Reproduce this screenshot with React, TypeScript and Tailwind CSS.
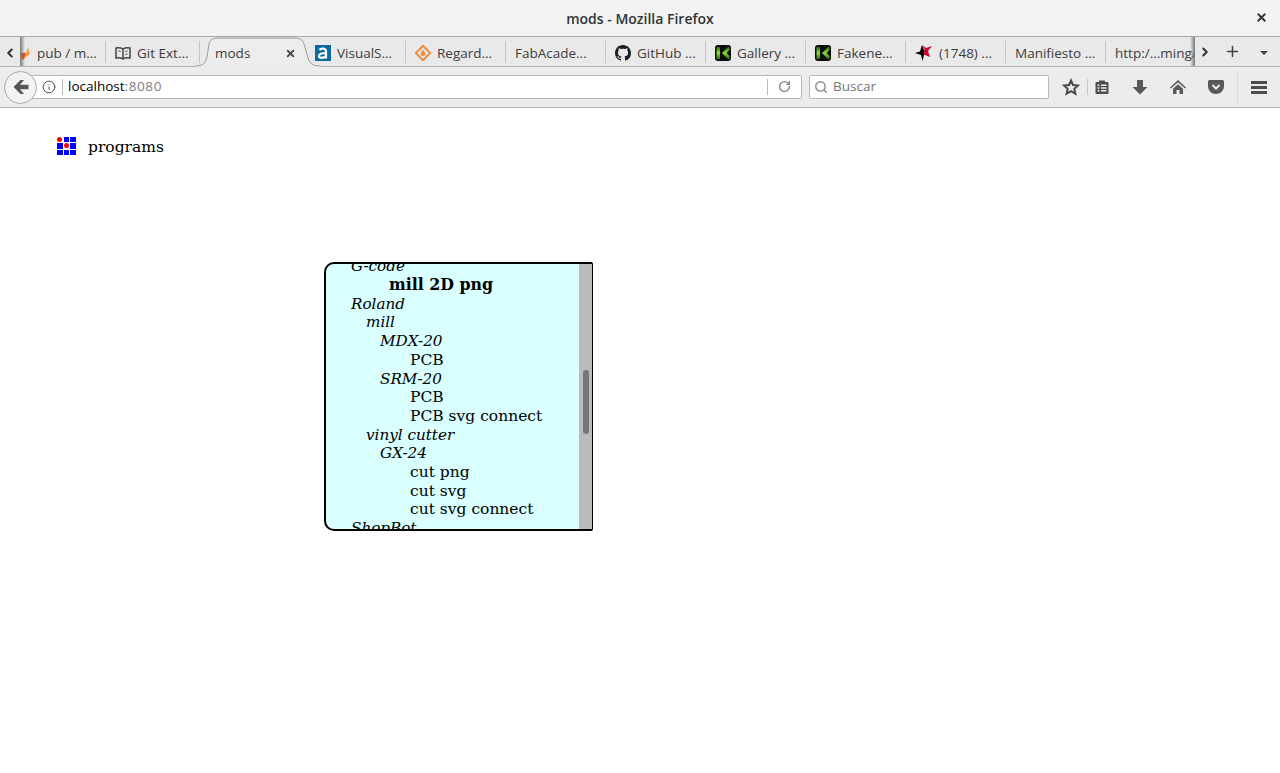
import type { ReactNode } from "react"
import { Plus, X, ChevronLeft, ChevronRight, Info, RotateCw, Search } from "lucide-react"

type Tab = { label: string; icon?: ReactNode; width: string }

const UI_FONT = "font-['Open_Sans','Noto_Sans',sans-serif]"

function GitLabIcon() {
  return (
    <svg width="16" height="16" viewBox="0 0 16 16" className="shrink-0">
      <path d="M8 15 1 9l2-7 2 6h6l2-6 2 7z" fill="#fc9d46" />
      <path d="M8 15 5 8h6z" fill="#e24329" />
    </svg>
  )
}

function BookIcon() {
  return (
    <svg width="16" height="16" viewBox="0 0 16 16" fill="none" stroke="#444" strokeWidth="1.5" className="shrink-0">
      <path d="M8 4C6.5 3 3 2.5 1 3v10c2-.5 5.500 0 7 1 1.500-1 5-1.500 7-1V3C13 2.500 9.500 3 8 4zM8 4v10" />
      <path d="M3.500 6c.8 0 1.700.2 2.300.5M10.200 6.500c.5-.3 1.400-.5 2.300-.5M10.200 9.500c.5-.3 1.400-.5 2.300-.5" strokeWidth="1" />
    </svg>
  )
}

function VisualStudioIcon() {
  return (
    <svg width="16" height="16" viewBox="0 0 16 16" className="shrink-0">
      <rect width="16" height="16" fill="#0e6a9e" />
      <path d="M4.500 5C6 3 11 3 11 6.500V13.500M11 8C6.500 7.800 4 9 4 11c0 2.500 5 2.500 7 0" fill="none" stroke="#fff" strokeWidth="2.200" />
    </svg>
  )
}

function RegardIcon() {
  return (
    <svg width="16" height="16" viewBox="0 0 16 16" className="shrink-0">
      <path d="M8 .8 15.200 8 8 15.200.8 8z" fill="none" stroke="#f08a3c" strokeWidth="2" />
      <path d="M8 4.500 10.500 8.500A2.500 2.500 0 1 1 5.500 8.500z" fill="#f08a3c" />
    </svg>
  )
}

function GitHubIcon() {
  return (
    <svg width="16" height="16" viewBox="0 0 16 16" fill="#1b1f23" className="shrink-0">
      <path d="M8 0C3.580 0 0 3.580 0 8c0 3.540 2.290 6.530 5.470 7.590.4.070.55-.17.55-.38 0-.19-.01-.82-.01-1.490-2.010.37-2.530-.49-2.690-.94-.09-.23-.48-.94-.82-1.130-.28-.15-.68-.52-.01-.53.63-.01 1.080.58 1.230.82.720 1.210 1.870.87 2.330.66.070-.52.280-.87.510-1.070-1.780-.2-3.640-.89-3.640-3.950 0-.87.310-1.590.82-2.150-.08-.2-.36-1.020.08-2.120 0 0 .67-.21 2.200.82.640-.18 1.320-.27 2-.27s1.360.09 2 .27c1.530-1.040 2.200-.82 2.200-.82.440 1.100.16 1.920.08 2.120.51.560.82 1.270.82 2.150 0 3.070-1.870 3.750-3.650 3.950.29.250.54.730.54 1.480 0 1.070-.01 1.930-.01 2.200 0 .21.150.46.550.38A8.010 8.010 0 0 0 16 8c0-4.420-3.580-8-8-8z" />
    </svg>
  )
}

function KIcon({ id }: { id: string }) {
  return (
    <svg width="16" height="16" viewBox="0 0 16 16" className="shrink-0">
      <defs>
        <linearGradient id={id} x1="0" y1="0" x2="0" y2="1">
          <stop offset="0" stopColor="#2c6a10" />
          <stop offset="0.5" stopColor="#8fe034" />
          <stop offset="1" stopColor="#2c6a10" />
        </linearGradient>
      </defs>
      <rect width="16" height="16" rx="3" fill="#0c0c0c" />
      <path d="M1.500 2h3.500v12H1.500z" fill={`url(#${id})`} />
      <path d="M13 2 7 8l6 6h1.500V11L11.500 8l3-3V2z" fill={`url(#${id})`} />
    </svg>
  )
}

function StarFaviconIcon() {
  return (
    <svg width="18" height="18" viewBox="0 0 18 18" className="shrink-0">
      <path d="M0 9 5 7.500 7 1 9 6l3 2-3 3-1.500 6L6 11z" fill="#000" />
      <path d="M7 1 11 4 17 2 13 7l2 6-5-2-2-2 2-3z" fill="#cc0033" />
    </svg>
  )
}

function StarIcon() {
  return (
    <svg width="18" height="18" viewBox="0 0 18 18" fill="none" stroke="#4a4a4a" strokeWidth="2" strokeLinejoin="miter" className="shrink-0">
      <path d="M9 2.500 11 7l5 .5-3.700 3.300 1.100 5L9 13.200l-4.400 2.600 1.100-5L2 7.500 7 7z" />
    </svg>
  )
}

function BackArrowIcon() {
  return (
    <svg width="16" height="16" viewBox="0 0 16 16" fill="#555" className="shrink-0">
      <path d="M0.500 8 7.500 1H11L7 5.800h8.500v4.400H7L11 15H7.500z" />
    </svg>
  )
}

function LibraryIcon() {
  return (
    <svg width="16" height="16" viewBox="0 0 16 16" className="shrink-0">
      <path d="M2.500 3H5V1.500h6V3h2.500A1 1 0 0 1 14.500 4v10a1 1 0 0 1-1 1h-11a1 1 0 0 1-1-1V4a1 1 0 0 1 1-1z" fill="#4d4d4d" />
      <path d="M3.500 5.500h2V7h-2zm3.500 0h5.500V7H7zM3.500 8.200h2v1.500h-2zm3.500 0h5.500v1.500H7zM3.500 11h2v1.500h-2zm3.500 0h5.500v1.500H7z" fill="#ececec" />
    </svg>
  )
}

function DownloadIcon() {
  return (
    <svg width="16" height="16" viewBox="0 0 16 16" fill="#595959" className="shrink-0">
      <path d="M5 1h6v7h4.500L8 15.500.5 8H5z" />
    </svg>
  )
}

function HomeIcon() {
  return (
    <svg width="16" height="16" viewBox="0 0 16 16" fill="#595959" className="shrink-0">
      <path d="M8 1 0 8.500l1 1L8 3.300l7 6.200 1-1z" />
      <path d="M3 9.800 8 5.300l5 4.500V15H9.500v-4h-3v4H3z" />
    </svg>
  )
}

function PocketIcon() {
  return (
    <svg width="16" height="16" viewBox="0 0 16 16" className="shrink-0">
      <path d="M1.500 1h13A1.500 1.500 0 0 1 16 2.500V7c0 4.500-3.500 8-8 8s-8-3.500-8-8V2.500A1.500 1.500 0 0 1 1.500 1z" fill="#595959" />
      <path d="m4.500 6 3.500 3.500L11.500 6" fill="none" stroke="#ececec" strokeWidth="2" />
    </svg>
  )
}

const TABS_AFTER: Tab[] = [
  { label: "VisualS...", icon: <VisualStudioIcon />, width: "w-[100px]" },
  { label: "Regard...", icon: <RegardIcon />, width: "w-[100px]" },
  { label: "FabAcade...", width: "w-[100px]" },
  { label: "GitHub ...", icon: <GitHubIcon />, width: "w-[100px]" },
  { label: "Gallery ...", icon: <KIcon id="k-gallery" />, width: "w-[100px]" },
  { label: "Fakene...", icon: <KIcon id="k-fakene" />, width: "w-[100px]" },
  { label: "(1748) ...", icon: <StarFaviconIcon />, width: "w-[100px]" },
  { label: "Manifiesto ...", width: "w-[100px]" },
]

type TreeRow = { text: string; indent: string; style?: "italic" | "bold" }

const TREE: TreeRow[] = [
  { text: "G-code", indent: "pl-[25px]", style: "italic" },
  { text: "mill 2D png", indent: "pl-[63px]", style: "bold" },
  { text: "Roland", indent: "pl-[25px]", style: "italic" },
  { text: "mill", indent: "pl-[40px]", style: "italic" },
  { text: "MDX-20", indent: "pl-[54px]", style: "italic" },
  { text: "PCB", indent: "pl-[84px]" },
  { text: "SRM-20", indent: "pl-[54px]", style: "italic" },
  { text: "PCB", indent: "pl-[84px]" },
  { text: "PCB svg connect", indent: "pl-[84px]" },
  { text: "vinyl cutter", indent: "pl-[40px]", style: "italic" },
  { text: "GX-24", indent: "pl-[54px]", style: "italic" },
  { text: "cut png", indent: "pl-[84px]" },
  { text: "cut svg", indent: "pl-[84px]" },
  { text: "cut svg connect", indent: "pl-[84px]" },
  { text: "ShopBot", indent: "pl-[25px]", style: "italic" },
]

function TabItem({ tab }: { tab: Tab }) {
  return (
    <div className={`${tab.width} h-[29px] shrink-0 flex items-center gap-[6px] pl-[9px] pr-[8px] pt-[3px] relative`}>
      {tab.icon}
      <span className="text-[13.5px] text-[#3c3c3c] whitespace-nowrap overflow-hidden">{tab.label}</span>
      <span className="absolute right-0 top-[4px] h-[22px] w-px bg-[#c4c4c4]" />
    </div>
  )
}

function ToolButton({ children, width }: { children: ReactNode; width: string }) {
  return <div className={`${width} h-[24px] flex items-center justify-center shrink-0`}>{children}</div>
}

function ModsLogo() {
  const cells = [true, false, false, false, true, false, false, false, false]
  return (
    <div className="grid grid-cols-3 grid-rows-3 gap-px w-[19px] h-[19px]">
      {cells.map((dot, i) => (
        <div key={i} className={dot ? "flex items-center justify-center bg-white" : "bg-[#0000ff]"}>
          {dot && <div className="w-[5px] h-[5px] shrink-0 rounded-full bg-[#ff0000]" />}
        </div>
      ))}
    </div>
  )
}

export default function App() {
  return (
    <div className="w-[1280px] h-[773px] bg-white overflow-hidden flex flex-col">
      <header className={`${UI_FONT} shrink-0`}>
        <div className="h-[37px] bg-[#f3f3f3] border-b border-[#a8a8a8] flex items-center relative">
          <div className="flex-1 text-center text-[14px] font-semibold text-[#2e3436]">mods - Mozilla Firefox</div>
          <X size={13} strokeWidth={3.5} className="absolute right-[12px] top-[11px] text-[#2e3436]" />
        </div>

        <div className="h-[30px] bg-[#e9e9e9] border-b border-[#b5b5b5] flex items-start">
          <div className="w-[20px] h-[29px] shrink-0 flex items-center justify-center pt-[2px]">
            <ChevronLeft size={14} strokeWidth={3.5} className="text-[#333]" />
          </div>
          <div className="w-[86px] h-[29px] shrink-0 flex items-center gap-[6px] pt-[3px] relative overflow-hidden">
            <div className="w-[11px] overflow-hidden flex justify-end shrink-0">
              <GitLabIcon />
            </div>
            <span className="text-[13.5px] text-[#3c3c3c] whitespace-nowrap">pub / m...</span>
            <span className="absolute right-0 top-[4px] h-[22px] w-px bg-[#c4c4c4]" />
            <span className="absolute left-0 top-0 h-[29px] w-[5px] bg-gradient-to-r from-[#777] to-transparent" />
          </div>
          <TabItem tab={{ label: "Git Ext...", icon: <BookIcon />, width: "w-[94px]" }} />
          <div className="w-[106px] h-[30px] shrink-0 relative flex items-center pl-[15px] pr-[10px] pt-[3px] justify-between">
            <svg width="126" height="30" viewBox="0 0 126 30" fill="none" className="absolute -left-[5px] top-0">
              <path d="M0 29C8 29 10 27 12 20L14 7C15 3 18 1 23 1H100C105 1 108 3 109 7L113 21C115 27 118 29 126 29V30H0z" fill="#ededed" />
              <path d="M0 29C8 29 10 27 12 20L14 7C15 3 18 1 23 1H100C105 1 108 3 109 7L113 21C115 27 118 29 126 29" stroke="#9a9a9a" />
            </svg>
            <span className="relative text-[13.5px] text-[#3c3c3c]">mods</span>
            <X size={11} strokeWidth={4} className="relative text-[#4a4a4a]" />
          </div>
          {TABS_AFTER.map((tab) => (
            <TabItem key={tab.label} tab={tab} />
          ))}
          <div className="w-[89px] h-[29px] shrink-0 flex items-center pl-[9px] pt-[3px] relative overflow-hidden">
            <span className="text-[13.5px] text-[#3c3c3c] whitespace-nowrap">http:/...ming/</span>
            <span className="absolute right-0 top-0 h-[29px] w-[5px] bg-gradient-to-r from-transparent to-[#777]" />
          </div>
          <div className="w-[20px] h-[29px] shrink-0 flex items-center justify-center pt-[1px]">
            <ChevronRight size={14} strokeWidth={3.5} className="text-[#333]" />
          </div>
          <div className="w-[35px] h-[29px] shrink-0 flex items-center justify-center">
            <Plus size={17} strokeWidth={2.2} className="text-[#444]" />
          </div>
          <div className="flex-1 h-[29px] flex items-center justify-center pr-[3px] pt-[2px]">
            <div className="w-0 h-0 border-x-[4px] border-x-transparent border-t-[4px] border-t-[#444]" />
          </div>
        </div>

        <div className="h-[41px] bg-[#ececec] border-b border-[#b0b0b0] flex items-center pl-[4px] relative">
          <div className="w-[33px] h-[33px] shrink-0 rounded-full bg-[#f2f2f2] border border-[#a8a8a8] flex items-center justify-center z-10">
            <BackArrowIcon />
          </div>
          <div className="w-[773px] -ml-[8px] h-[24px] -mt-[1px] shrink-0 bg-white border border-[#b8b8b8] rounded-r-[2px] flex items-center pl-[12px]">
            <Info size={14} strokeWidth={1.6} className="text-[#444] shrink-0" />
            <span className="ml-[6px] mr-[5px] w-px h-[16px] bg-[#bbb]" />
            <span className="text-[13.5px] text-black">localhost</span>
            <span className="text-[13.5px] tracking-[0.6px] text-[#808080]">:8080</span>
            <div className="flex-1" />
            <span className="w-px h-[16px] bg-[#bbb]" />
            <RotateCw size={13} strokeWidth={2.6} className="mx-[10px] text-[#7c8a96]" />
          </div>
          <div className="w-[240px] ml-[7px] h-[24px] -mt-[1px] shrink-0 bg-white border border-[#b8b8b8] rounded-[2px] flex items-center pl-[4px]">
            <Search size={14} strokeWidth={2.4} className="text-[#8a8a8a]" />
            <span className="ml-[5px] text-[13.5px] text-[#757575]">Buscar</span>
          </div>
          <div className="flex items-center ml-[9px]">
            <ToolButton width="w-[26px]">
              <StarIcon />
            </ToolButton>
            <span className="ml-[3px] w-px h-[16px] bg-[#c8c8c8]" />
            <ToolButton width="w-[28px]">
              <LibraryIcon />
            </ToolButton>
            <div className="ml-[5px] flex">
              <ToolButton width="w-[38px]">
                <DownloadIcon />
              </ToolButton>
              <ToolButton width="w-[38px]">
                <HomeIcon />
              </ToolButton>
              <ToolButton width="w-[38px]">
                <PocketIcon />
              </ToolButton>
            </div>
            <span className="ml-[2px] w-px h-[32px] bg-[#dcdcdc]" />
            <ToolButton width="w-[42px]">
              <div className="w-[16px] flex flex-col gap-[2px]">
                <span className="h-[3px] bg-[#4d4d4d]" />
                <span className="h-[3px] bg-[#4d4d4d]" />
                <span className="h-[3px] bg-[#4d4d4d]" />
              </div>
            </ToolButton>
          </div>
        </div>
      </header>

      <main className="flex-1 bg-white font-['DejaVu_Serif',serif] text-black text-[15.5px]">
        <div className="pt-[28px] pl-[57px] flex items-center gap-[12px] h-[48px]">
          <ModsLogo />
          <span className="relative top-[2px]">programs</span>
        </div>
        <div className="mt-[106px] ml-[324px] w-[269px] h-[269px] bg-[#d9ffff] border-2 border-r border-black rounded-tl-[10px] rounded-bl-[10px] rounded-tr-[2px] rounded-br-[2px] overflow-hidden flex">
          <div className="flex-1 overflow-hidden leading-[18.7px]">
            <div className="-mt-[6.6px]">
              {TREE.map((row, i) => (
                <div
                  key={i}
                  className={`${row.indent} h-[18.7px] whitespace-nowrap ${row.style === "italic" ? "italic text-[15.2px]" : ""} ${row.style === "bold" ? "font-bold text-[15.8px]" : ""}`}
                >
                  {row.text}
                </div>
              ))}
            </div>
          </div>
          <div className="w-[13px] shrink-0 bg-[#b9bcbb] flex flex-col items-center pt-[106px]">
            <div className="w-[6px] h-[64px] rounded-full bg-[#757876]" />
          </div>
        </div>
      </main>
    </div>
  )
}
